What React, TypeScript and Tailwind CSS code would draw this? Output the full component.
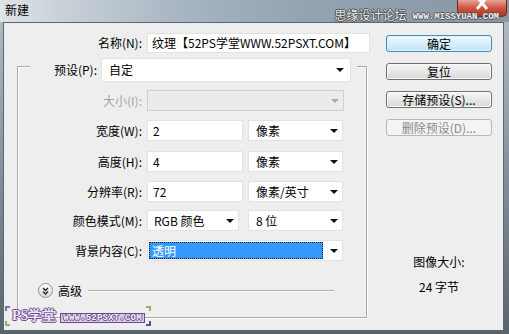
import React from 'react';

function Arrow({ muted = false }: { muted?: boolean }) {
  return (
    <svg width="8" height="4" viewBox="0 0 8 4" className="shrink-0">
      <path d="M0 0H8L4 4Z" fill={muted ? '#a8a8a8' : '#111'} />
    </svg>
  );
}

function Select({ value, className = '', muted = false, pl = 'pl-[7px]' }: { value?: string; className?: string; muted?: boolean; pl?: string }) {
  return (
    <div
      className={`flex items-center justify-between border pr-[4px] ${pl} ${
        muted ? 'border-[#cfcfcf] bg-[#ebebeb]' : 'border-[#e2e2e2] bg-white'
      } ${className}`}
    >
      <span className="whitespace-nowrap">{value}</span>
      <Arrow muted={muted} />
    </div>
  );
}

function Input({ value, className = '' }: { value: string; className?: string }) {
  return (
    <div className={`flex items-center border border-[#e2e2e2] bg-white pl-[4px] whitespace-nowrap ${className}`}>{value}</div>
  );
}

function Button({ label, primary = false, disabled = false }: { label: string; primary?: boolean; disabled?: boolean }) {
  const tone = primary
    ? 'border-[#3c8fb5] bg-[linear-gradient(#f0f9fd,#d9eefa_50%,#c2e4f6)] shadow-[inset_0_0_0_1px_#dff3fc]'
    : disabled
    ? 'border-[#b5b8ba] bg-[#f4f4f4] text-[#8a8a8a]'
    : 'border-[#707070] bg-[linear-gradient(#f6f6f6,#e8e8e8_50%,#d8d8d8)] shadow-[inset_0_0_0_1px_#fbfbfb]';
  return (
    <div className={`mt-[11px] first:mt-0 flex h-[17px] w-[106px] items-center justify-center rounded-[3px] border leading-none ${tone}`}>
      {label}
    </div>
  );
}

function Row({ label, muted = false, children, className = '' }: { label: string; muted?: boolean; children: React.ReactNode; className?: string }) {
  return (
    <div className={`flex h-[21px] items-stretch ${className}`}>
      <div className={`flex w-[124px] items-center justify-end whitespace-nowrap ${muted ? 'text-[#a3a3a3]' : ''}`}>{label}</div>
      <div className="ml-[5px] flex">{children}</div>
    </div>
  );
}

export default function App() {
  return (
    <div className="relative flex h-[334px] w-[509px] flex-col overflow-hidden bg-[linear-gradient(#b4bfc8,#7c8893_60%,#59636c)] font-['Noto_Sans_CJK_SC','Microsoft_YaHei',sans-serif] text-[12px] leading-[16px] text-black">
      {/* title bar */}
      <div className="relative h-[22px] shrink-0 bg-[linear-gradient(90deg,#dfe4e8_0%,#c9d1d8_12%,#a8b6c2_35%,#93a3b1_60%,#8797a4_100%)] pl-[5px] pt-[2px]">
        <span>新建</span>
        <div className="absolute right-[2px] top-0 flex h-[17px] w-[50px] justify-center rounded-b-[5px] border border-t-0 border-[#6b2a22] bg-[linear-gradient(#e8a495,#cc5443_50%,#ad3626)]">
          <svg width="14" height="10" viewBox="0 0 14 10">
            <path d="M2 -3L12 9M12 -3L2 9" stroke="#ffffff" strokeWidth="2.8" />
          </svg>
        </div>
        <div className="absolute right-[10px] top-[8px] flex items-end gap-[6px]">
          <span className="text-[12px] leading-[14px] text-[#f2f2f2] [text-shadow:0_0_1px_#333,1px_0_0_#555,-1px_0_0_#555,0_1px_0_#555,0_-1px_0_#555]">
            思缘设计论坛
          </span>
          <span className="font-['Liberation_Mono',monospace] text-[9px] font-bold leading-[10px] text-[#f0f0f0] [text-shadow:1px_0_0_#555,-1px_0_0_#555,0_1px_0_#555,0_-1px_0_#555]">
            WWW.MISSYUAN.COM
          </span>
        </div>
      </div>

      {/* dialog body */}
      <div className="mb-[3px] ml-[3px] mr-[5px] flex flex-1 border border-[#5b6670] bg-[#eeeeee]">
        <div className="w-[367px] pt-[10px]">
          <div className="flex h-[20px] items-stretch">
            <div className="flex w-[138px] items-center justify-end">名称(N):</div>
            <Input value="纹理【52PS学堂WWW.52PSXT.COM】" className="ml-[5px] w-[223px]" />
          </div>

          <div className="ml-[13px] mt-[13px] flex h-[252px] w-[350px] flex-col border border-[#a9a9a9] shadow-[inset_1px_1px_0_#ffffff,1px_1px_0_#ffffff]">
            <div className="-mt-[9px] ml-[12px] flex h-[24px] items-stretch self-start bg-[#eeeeee] pr-[6px]">
              <div className="flex w-[67px] items-center justify-end">预设(P):</div>
              <Select value="自定" className="ml-[4px] w-[250px] pr-[6px]" />
            </div>

            <Row label="大小(I):" muted className="mt-[8px]">
              <Select muted className="w-[197px]" />
            </Row>
            <Row label="宽度(W):" className="mt-[9px]">
              <Input value="2" className="w-[96px] pl-[5px]" />
              <Select value="像素" className="ml-[5px] w-[95px]" />
            </Row>
            <Row label="高度(H):" className="mt-[10px]">
              <Input value="4" className="w-[96px] pl-[5px]" />
              <Select value="像素" className="ml-[5px] w-[95px]" />
            </Row>
            <Row label="分辨率(R):" className="mt-[9px]">
              <Input value="72" className="w-[96px] pl-[5px]" />
              <Select value="像素/英寸" className="ml-[5px] w-[95px]" />
            </Row>
            <Row label="颜色模式(M):" className="mt-[8px]">
              <Select value="RGB 颜色" pl="pl-[6px]" className="w-[92px]" />
              <Select value="8 位" className="ml-[9px] w-[95px]" />
            </Row>
            <Row label="背景内容(C):" className="mt-[9px]">
              <div className="flex w-[196px] items-center border border-[#e2e2e2] bg-white pl-[1px] pr-[4px]">
                <div className="flex h-[17px] flex-1 items-center border border-dotted border-[#1a1a1a] bg-[#3399ff] pl-[2px] text-white">透明</div>
                <div className="ml-[7px]">
                  <Arrow />
                </div>
              </div>
            </Row>

            <div className="ml-[20px] mr-[32px] mt-[22px] flex h-[15px] items-center">
              <div className="flex h-[15px] w-[15px] items-center justify-center rounded-full border border-[#8e9091] bg-[linear-gradient(#ffffff,#d9d9d9)]">
                <svg width="7" height="8" viewBox="0 0 7 8">
                  <path d="M1 1L3.5 3.5L6 1M1 4.5L3.5 7L6 4.5" stroke="#222" strokeWidth="1.3" fill="none" />
                </svg>
              </div>
              <span className="ml-[5px]">高级</span>
              <div className="ml-[6px] h-[2px] flex-1 border-t border-[#a9a9a9] bg-white" />
            </div>
          </div>
        </div>

        <div className="ml-[15px] flex w-[106px] flex-col pt-[12px]">
          <Button label="确定" primary />
          <Button label="复位" />
          <Button label="存储预设(S)..." />
          <Button label="删除预设(D)..." disabled />
          <div className="mt-[118px] text-center">图像大小:</div>
          <div className="mt-[9px] text-center">24 字节</div>
        </div>
      </div>

      {/* bottom-left watermark */}
      <div className="absolute left-[5px] top-[306px] flex items-center">
        <div className="flex h-[20px] flex-col justify-between">
          <div className="h-[5px] w-[5px] border-l-2 border-t-2 border-[#8a6aa0]" />
          <div className="h-[5px] w-[5px] border-b-2 border-l-2 border-[#8fb070]" />
        </div>
        <span className="ml-[2px] font-['Liberation_Serif',serif] text-[14px] font-bold leading-[16px] text-[#efe6f7] [text-shadow:1px_0_0_#6a4a8e,-1px_0_0_#6a4a8e,0_1px_0_#6a4a8e,0_-1px_0_#6a4a8e]">
          PS学堂
        </span>
        <span className="ml-[4px] mt-[4px] border border-[#6a4a8e] bg-[#d9cde6] px-[2px] font-['Liberation_Mono',monospace] text-[9px] font-bold leading-[8px] tracking-[0.2px] text-[#f7f2fb] [text-shadow:1px_0_0_#6a4a8e,-1px_0_0_#6a4a8e,0_1px_0_#6a4a8e,0_-1px_0_#6a4a8e]">
          WWW.52PSXT.COM
        </span>
        <div className="ml-[1px] flex h-[20px] flex-col justify-between">
          <div className="h-[5px] w-[5px] border-r-2 border-t-2 border-[#b0a860]" />
          <div className="h-[5px] w-[5px] border-b-2 border-r-2 border-[#6a4a8e]" />
        </div>
      </div>
    </div>
  );
}
